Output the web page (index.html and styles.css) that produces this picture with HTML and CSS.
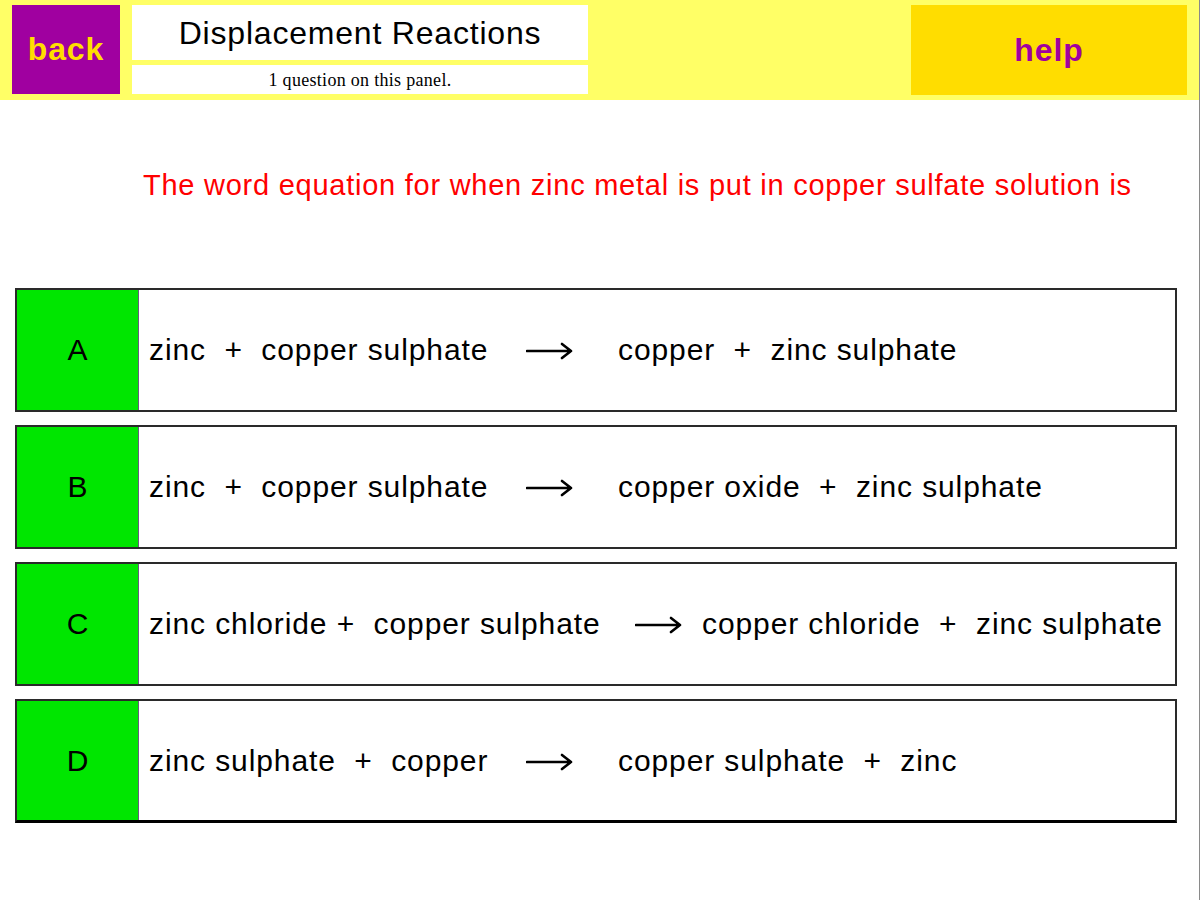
FILE: index.html
```html
<!DOCTYPE html>
<html lang="en">
<head>
<meta charset="utf-8">
<title>Displacement Reactions</title>
<link rel="stylesheet" href="styles.css">
</head>
<body>
<div class="page">
  <header class="topbar">
    <div class="btn back">back</div>
    <div class="titles">
      <div class="title">Displacement Reactions</div>
      <div class="subtitle">1 question on this panel.</div>
    </div>
    <div class="btn help">help</div>
  </header>
  <main class="content">
    <p class="question">The word equation for when zinc metal is put in copper sulfate solution is</p>
    <div class="options">
      <div class="option">
        <div class="letter">A</div>
        <div class="eq">
          <span class="lhs">zinc  +  copper sulphate</span>
          <svg class="arrow" viewBox="0 0 48 20" width="48" height="20"><path d="M1 10 H45 M36 3 L45 10 L36 17" fill="none" stroke="#000" stroke-width="2.6" stroke-linecap="round" stroke-linejoin="round"/></svg>
          <span class="rhs">copper  +  zinc sulphate</span>
        </div>
      </div>
      <div class="option">
        <div class="letter">B</div>
        <div class="eq">
          <span class="lhs">zinc  +  copper sulphate</span>
          <svg class="arrow" viewBox="0 0 48 20" width="48" height="20"><path d="M1 10 H45 M36 3 L45 10 L36 17" fill="none" stroke="#000" stroke-width="2.6" stroke-linecap="round" stroke-linejoin="round"/></svg>
          <span class="rhs">copper oxide  +  zinc sulphate</span>
        </div>
      </div>
      <div class="option">
        <div class="letter">C</div>
        <div class="eq eq-wide">
          <span class="lhs">zinc chloride +  copper sulphate</span>
          <svg class="arrow" viewBox="0 0 48 20" width="48" height="20"><path d="M1 10 H45 M36 3 L45 10 L36 17" fill="none" stroke="#000" stroke-width="2.6" stroke-linecap="round" stroke-linejoin="round"/></svg>
          <span class="rhs">copper chloride  +  zinc sulphate</span>
        </div>
      </div>
      <div class="option last">
        <div class="letter">D</div>
        <div class="eq">
          <span class="lhs">zinc sulphate  +  copper</span>
          <svg class="arrow" viewBox="0 0 48 20" width="48" height="20"><path d="M1 10 H45 M36 3 L45 10 L36 17" fill="none" stroke="#000" stroke-width="2.6" stroke-linecap="round" stroke-linejoin="round"/></svg>
          <span class="rhs">copper sulphate  +  zinc</span>
        </div>
      </div>
    </div>
  </main>
</div>
</body>
</html>
```

FILE: styles.css
```css
html, body {
  margin: 0;
  padding: 0;
  background: #ffffff;
}

.page {
  width: 1199px;
  min-height: 900px;
  border-right: 1px solid #8a8a8a;
  font-family: "Liberation Sans", Arial, sans-serif;
  color: #000;
}

.topbar {
  height: 100px;
  box-sizing: border-box;
  background: #ffff66;
  display: flex;
  align-items: flex-start;
  padding: 5px 12px 0 12px;
  gap: 12px;
}

.btn {
  height: 89px;
  display: flex;
  align-items: center;
  justify-content: center;
  font-weight: bold;
  font-size: 32px;
  letter-spacing: 0.9px;
}

.back {
  width: 108px;
  background: #a000a0;
  color: #ffdd00;
}

.help {
  width: 276px;
  height: 90px;
  margin-left: auto;
  background: #ffdd00;
  color: #a000a0;
}

.titles {
  width: 456px;
  display: flex;
  flex-direction: column;
  gap: 5px;
}

.title {
  height: 55px;
  background: #fff;
  display: flex;
  align-items: center;
  justify-content: center;
  font-size: 32px;
  letter-spacing: 0.8px;
  padding-top: 2px;
  box-sizing: border-box;
}

.subtitle {
  height: 29px;
  background: #fff;
  display: flex;
  align-items: center;
  justify-content: center;
  font-family: "Liberation Serif", "Times New Roman", serif;
  font-size: 18px;
  letter-spacing: 0.3px;
  padding-top: 2px;
  box-sizing: border-box;
}

.content {
  padding: 0;
}

.question {
  margin: 70px 0 0 143px;
  line-height: 30px;
  font-size: 29px;
  letter-spacing: 0.75px;
  color: #ff0000;
}

.options {
  margin: 88px 0 0 15px;
  width: 1162px;
  display: flex;
  flex-direction: column;
  gap: 13px;
}

.option {
  height: 124px;
  box-sizing: border-box;
  border: 2px solid #2a2a2a;
  display: flex;
  background: #fff;
}

.option.last {
  border-bottom: 3px solid #000;
}

.letter {
  width: 121px;
  background: #00e600;
  border-right: 1px solid #6a5a80;
  display: flex;
  align-items: center;
  justify-content: center;
  font-size: 30px;
}

.eq {
  display: flex;
  align-items: center;
  padding-left: 10px;
  font-size: 30px;
  letter-spacing: 0.9px;
  white-space: pre;
}

.lhs {
  width: 377px;
}

.arrow {
  width: 48px;
  height: 20px;
  margin-top: 2px;
}

.rhs {
  margin-left: 44px;
}

.eq-wide .lhs {
  width: 486px;
}

.eq-wide .rhs {
  margin-left: 19px;
}
```
